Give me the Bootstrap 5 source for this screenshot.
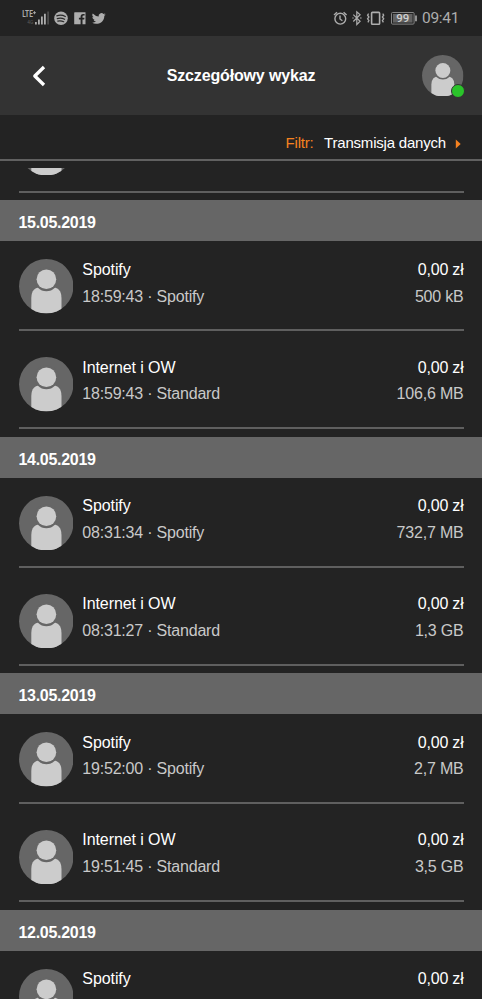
<!DOCTYPE html>
<html lang="pl">
<head>
<meta charset="utf-8">
<meta name="viewport" content="width=device-width, initial-scale=1">
<title>Szczegółowy wykaz</title>
<link rel="stylesheet" href="https://cdn.jsdelivr.net/npm/bootstrap@5.3.0/dist/css/bootstrap.min.css">
<style>
body{background:#232323;font-family:"Liberation Sans",Arial,sans-serif;color:#fff}
.screen{height:999px}
.statusbar{height:36px;color:#adadad;padding:0 22px}
.statusbar svg{display:block;flex:none}
.clock{font:15.5px/37px Roboto,sans-serif;letter-spacing:-.3px;width:37px;margin-left:4px;margin-right:1px}
.topbar{height:79.3px;background:#333;padding:0 18.5px 0 31px}
.topbar h1{font-size:16px;letter-spacing:-.15px;margin-left:13px}
.me{width:41.5px;height:41.5px}
.me svg{display:block}
.online{position:absolute;right:-1.5px;bottom:-1.5px;width:14px;height:14px;background:#2ac42a;border:1.4px solid #333}
.filterbar{height:45.5px;border-bottom:2px solid #616161;padding:13px 20px 0 0;font-size:15px;letter-spacing:-.2px}
.accent{color:#f58220;margin-right:10.5px}
.list{margin-top:7.4px;min-height:0}
.day{height:41px;line-height:46.6px;background:#666;padding-left:18.5px;font-size:16px;letter-spacing:-.3px}
.entry{height:97.7px;padding:18px 18.5px 0}
.entry-main{height:72px;border-bottom:2px solid #5f5f5f}
.entry-main>svg{width:54.5px;height:54.5px;flex:none;margin-right:9.3px}
.entry-text{font-size:16px;line-height:26.7px;letter-spacing:-.2px;margin-top:-2.6px}
.name{letter-spacing:-.08px}
.detail{color:#c9c9c9}
.cut{margin-top:-65.4px}
</style>
</head>
<body>
<svg width="0" height="0" class="position-absolute"><defs>
<clipPath id="round"><circle cx="27.25" cy="27.25" r="27.2"/></clipPath>
<symbol id="person" viewBox="0 0 54.5 54.5"><g clip-path="url(#round)"><rect width="54.5" height="54.5" fill="#666"/><path d="M12.3 55V39Q12.3 28 23 28H31.8Q42.5 28 42.5 39V55Z" fill="#ccc"/><circle cx="27.4" cy="20.3" r="12" fill="#666"/><circle cx="27.4" cy="20.3" r="9.8" fill="#ccc"/></g></symbol>
</defs></svg>
<div class="screen d-flex flex-column overflow-hidden">
  <div class="statusbar d-flex align-items-center flex-shrink-0">
    <svg width="86" height="36" viewBox="22 0 86 36" fill="#adadad">
      <text x="22.3" y="17.3" font-family="Roboto" font-size="9" font-weight="700" textLength="10.5" lengthAdjust="spacingAndGlyphs">LTE</text>
      <path d="M33 12.7h3M34.5 11.2v3" stroke="#adadad" stroke-width=".9"/>
      <text x="27.3" y="24.2" font-family="Roboto" font-size="6" fill="#5c5c5c" textLength="6" lengthAdjust="spacingAndGlyphs">4G</text>
      <path d="M35 22h1.8v2.6H35zM38 19.5h1.8v5.1H38zM41 16.6h1.8v8H41zM44 13.8h1.8v10.8H44z"/><path d="M47.2 11.5H49v13.1h-1.8z" fill="#4b4b4b"/>
      <circle cx="61" cy="18.2" r="6.8"/><path d="M56.8 15.8q4.6-1.4 8.5 .7M57.3 18.6q3.8-1.1 7.3.7M57.8 21.1q3-.8 5.9.6" fill="none" stroke="#292929" stroke-width="1.25" stroke-linecap="round"/>
      <path d="M74.2 12.3h11.3v12h-3v-4.7h1.7l.3-1.9h-2v-1.1q0-1 1.1-1h1v-1.7h-1.5q-2.5 0-2.5 2.5v1.3h-1.7v1.9h1.7v4.7h-6.4V13q0-.7.6-.7z"/>
      <path transform="translate(91.8 11.9) scale(.87 .82)" d="M5.03 14.5c6.04 0 9.34-5 9.34-9.34v-.43A6.7 6.7 0 0 0 16 3.04a6.6 6.6 0 0 1-1.88.51A3.3 3.3 0 0 0 15.56 1.74a6.6 6.6 0 0 1-2.08.8A3.29 3.29 0 0 0 7.88 5.5 9.32 9.32 0 0 1 1.11 2.1a3.29 3.29 0 0 0 1.02 4.38A3.3 3.3 0 0 1 .64 6.06v.04a3.29 3.29 0 0 0 2.63 3.22 3.2 3.2 0 0 1-.86.12 3 3 0 0 1-.62-.06 3.29 3.29 0 0 0 3.07 2.28A6.6 6.6 0 0 1 0 13.03a9.3 9.3 0 0 0 5.03 1.47"/>
    </svg>
    <svg class="ms-auto" width="86" height="36" viewBox="333 0 86 36" fill="none" stroke="#adadad" stroke-width="1.4">
      <circle cx="341.3" cy="18.7" r="5.4"/><path d="M341 15.5v3.5l2.4 1.7M335 15l3-2.8M347.6 15l-3-2.8"/>
      <path d="M354.3 14.6l6.8 6.7-3.3 3.2V11.8l3.3 3-6.8 6.7M353.3 18h1.4M361 18h1.6" stroke-width="1.2"/>
      <rect x="372.6" y="12.4" width="8" height="11.8" rx=".8" stroke-width="1.6"/><path d="M369.6 13.6l-1 1.6 1.3 1.8-1.3 1.8 1.3 1.8-1 1.8M383.7 13.6l1 1.6-1.3 1.8 1.3 1.8-1.3 1.8 1 1.8" stroke-width="1.3"/>
      <rect x="392.5" y="12.5" width="22.6" height="11.6" rx="1" stroke="#858585" stroke-width="1"/><path d="M394 14h19.5v8.6H394z" fill="#626262" stroke="none"/><path d="M417 15.4v5.8" stroke-width="1.6"/>
      <text x="397.3" y="22" font-family="Roboto" font-size="11" font-weight="500" fill="#d0d0d0" stroke="none" textLength="13" lengthAdjust="spacingAndGlyphs">99</text>
    </svg>
    <span class="clock text-nowrap flex-shrink-0">09:41</span>
  </div>
  <header class="topbar d-flex align-items-center justify-content-between flex-shrink-0">
    <svg width="16" height="24" viewBox="0 0 16 24" fill="none" stroke="#fff" stroke-width="3.3" stroke-linejoin="round"><path d="M13 3L3.8 12l9.2 9"/></svg>
    <h1 class="fw-bold mb-0">Szczegółowy wykaz</h1>
    <div class="me position-relative"><svg width="41.5" height="41.5"><use href="#person"/></svg><span class="online rounded-circle"></span></div>
  </header>
  <div class="filterbar d-flex align-items-center justify-content-end flex-shrink-0">
    <span class="accent">Filtr:</span><span>Transmisja danych</span>
    <svg class="ms-2" width="8" height="10" viewBox="0 0 8 10" fill="#f58220"><path d="M1.8 .5l4.9 4.5-4.9 4.5z"/></svg>
  </div>
  <main class="list flex-grow-1 overflow-hidden" id="list"></main>
</div>
<script>
const days = [
  [null, [["", "", "", ""]]],
  ["15.05.2019", [["Spotify", "18:59:43 · Spotify", "0,00 zł", "500 kB"], ["Internet i OW", "18:59:43 · Standard", "0,00 zł", "106,6 MB"]]],
  ["14.05.2019", [["Spotify", "08:31:34 · Spotify", "0,00 zł", "732,7 MB"], ["Internet i OW", "08:31:27 · Standard", "0,00 zł", "1,3 GB"]]],
  ["13.05.2019", [["Spotify", "19:52:00 · Spotify", "0,00 zł", "2,7 MB"], ["Internet i OW", "19:51:45 · Standard", "0,00 zł", "3,5 GB"]]],
  ["12.05.2019", [["Spotify", "", "0,00 zł", ""]]]
];
document.getElementById("list").innerHTML = days.map(([date, rows]) =>
  (date ? `<div class="day fw-bold">${date}</div>` : "") +
  rows.map(([name, info, price, size]) => `<div class="entry ${date ? "" : "cut"}"><div class="entry-main d-flex align-items-start">
    <svg><use href="#person"/></svg>
    <div class="entry-text flex-grow-1"><div class="name">${name}</div><div class="detail">${info}</div></div>
    <div class="entry-text text-end"><div>${price}</div><div class="detail">${size}</div></div>
  </div></div>`).join("")).join("");
</script>
<script src="https://cdn.jsdelivr.net/npm/bootstrap@5.3.0/dist/js/bootstrap.bundle.min.js"></script>
</body>
</html>
